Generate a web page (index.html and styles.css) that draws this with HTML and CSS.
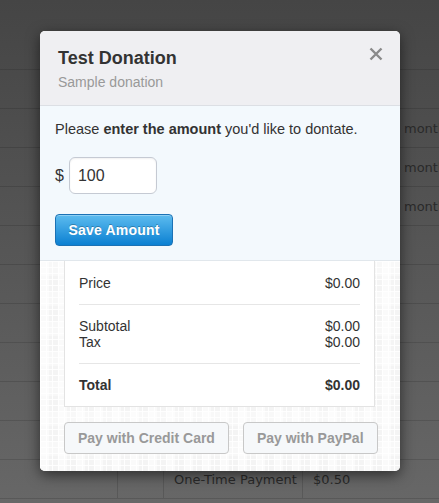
FILE: index.html
```html
<!DOCTYPE html>
<html>
<head>
<meta charset="utf-8">
<link rel="stylesheet" href="styles.css">
</head>
<body>
<div class="page">
  <div class="page-head"></div>
  <div class="row"><div class="c c1"></div><div class="c c2"></div><div class="c c3"></div><div class="c c4"></div><div class="c c5"></div></div>
  <div class="row"><div class="c c1"></div><div class="c c2"></div><div class="c c3"></div><div class="c c4"></div><div class="c c5">month</div></div>
  <div class="row"><div class="c c1"></div><div class="c c2"></div><div class="c c3"></div><div class="c c4"></div><div class="c c5">month</div></div>
  <div class="row"><div class="c c1"></div><div class="c c2"></div><div class="c c3"></div><div class="c c4"></div><div class="c c5">month</div></div>
  <div class="row"><div class="c c1"></div><div class="c c2"></div><div class="c c3"></div><div class="c c4"></div><div class="c c5"></div></div>
  <div class="row"><div class="c c1"></div><div class="c c2"></div><div class="c c3"></div><div class="c c4"></div><div class="c c5"></div></div>
  <div class="row"><div class="c c1"></div><div class="c c2"></div><div class="c c3"></div><div class="c c4"></div><div class="c c5"></div></div>
  <div class="row"><div class="c c1"></div><div class="c c2"></div><div class="c c3"></div><div class="c c4"></div><div class="c c5"></div></div>
  <div class="row"><div class="c c1"></div><div class="c c2"></div><div class="c c3"></div><div class="c c4"></div><div class="c c5"></div></div>
  <div class="row"><div class="c c1"></div><div class="c c2"></div><div class="c c3"></div><div class="c c4"></div><div class="c c5"></div></div>
  <div class="row"><div class="c c1"></div><div class="c c2"></div><div class="c c3">One-Time Payment</div><div class="c c4">$0.50</div><div class="c c5"></div></div>
</div>

<div class="modal">
  <div class="modal-head">
    <h1 class="title">Test Donation</h1>
    <div class="subtitle">Sample donation</div>
    <svg class="close" width="14" height="14" viewBox="0 0 14 14"><path d="M1.5 1.5 L12.5 12.5 M12.5 1.5 L1.5 12.5" stroke="#8a8a8a" stroke-width="2.4" stroke-linecap="butt"/></svg>
  </div>
  <div class="amount">
    <p class="lead">Please <b>enter the amount</b> you'd like to dontate.</p>
    <div class="field"><span class="cur">$</span><input class="inp" type="text" value="100"></div>
    <button class="save">Save Amount</button>
  </div>
  <div class="checkout">
    <div class="card">
      <div class="grp"><div class="ln"><span>Price</span><span>$0.00</span></div></div>
      <div class="grp"><div class="ln"><span>Subtotal</span><span>$0.00</span></div><div class="ln"><span>Tax</span><span>$0.00</span></div></div>
      <div class="grp total"><div class="ln"><span>Total</span><span>$0.00</span></div></div>
    </div>
    <div class="pay">
      <button class="pbtn">Pay with Credit Card</button>
      <button class="pbtn">Pay with PayPal</button>
    </div>
  </div>
</div>
</body>
</html>
```
FILE: styles.css
```css
html, body {
  margin: 0;
  padding: 0;
}
body {
  width: 439px;
  height: 503px;
  overflow: hidden;
  position: relative;
  background: linear-gradient(#454545, #676767);
  font-family: "Liberation Sans", Arial, sans-serif;
}
.page {
  font-family: "DejaVu Sans", sans-serif;
  font-size: 13px;
  color: #2a2a2a;
}
.page-head {
  height: 70px;
  border-bottom: 1px solid rgba(0,0,0,0.12);
  box-sizing: border-box;
}
.row {
  display: flex;
  height: 39px;
  border-bottom: 1px solid rgba(0,0,0,0.13);
  box-sizing: border-box;
}
.c {
  display: flex;
  align-items: center;
  box-sizing: border-box;
  flex: none;
  white-space: nowrap;
}
.c1 { width: 117px; }
.c2 { width: 46px; border-left: 1px solid rgba(0,0,0,0.13); }
.c3 { width: 139px; border-left: 1px solid rgba(0,0,0,0.13); padding-left: 10px; }
.c4 { width: 92px; border-left: 1px solid rgba(0,0,0,0.13); padding-left: 10px; }
.c5 { flex: 1 1 0; min-width: 0; padding-left: 10px; }

.modal {
  position: absolute;
  left: 40px;
  top: 31px;
  width: 360px;
  height: 440px;
  border-radius: 5px;
  overflow: hidden;
  background: #fff;
  box-shadow: 0 4px 14px rgba(0,0,0,0.55);
  display: flex;
  flex-direction: column;
  color: #333;
}
.modal-head {
  position: relative;
  background: #efeff2;
  padding: 16px 18px 13px;
  border-bottom: 1px solid #dcdfe4;
}
.title {
  margin: 0;
  font-size: 18px;
  line-height: 22px;
  font-weight: bold;
  color: #333;
}
.subtitle {
  margin-top: 3px;
  font-size: 14px;
  line-height: 20px;
  color: #999;
}
.close {
  position: absolute;
  top: 16px;
  right: 17px;
}
.amount {
  background: #f3f9fd;
  padding: 13px 15px 14px;
  border-bottom: 1px solid #e1e7ec;
}
.lead {
  margin: 0;
  font-size: 14.5px;
  line-height: 20px;
}
.field {
  display: flex;
  align-items: center;
  gap: 5px;
  margin-top: 18px;
  font-size: 16px;
}
.inp {
  width: 88px;
  height: 37px;
  box-sizing: border-box;
  border: 1px solid #c5cad3;
  border-radius: 6px;
  background: #fff;
  padding: 0 8px;
  font-family: "Liberation Sans", Arial, sans-serif;
  font-size: 16px;
  color: #333;
  box-shadow: inset 0 1px 2px rgba(0,0,0,0.06);
  outline: none;
}
.save {
  display: block;
  margin-top: 20px;
  width: 118px;
  height: 32px;
  border: 1px solid #1b72b5;
  border-radius: 4px;
  background: linear-gradient(#5dbcef, #0b80d2);
  color: #fff;
  font-family: "Liberation Sans", Arial, sans-serif;
  font-weight: bold;
  font-size: 14px;
  letter-spacing: 0.2px;
  text-shadow: 0 -1px 0 rgba(0,0,0,0.25);
  box-shadow: inset 0 1px 0 rgba(255,255,255,0.3);
  padding: 0;
}
.checkout {
  flex: 1;
  padding: 0 25px 0 24px;
  background-color: #f4f4f4;
  background-image:
    linear-gradient(90deg, rgba(255,255,255,0.9) 1px, transparent 1px),
    linear-gradient(rgba(255,255,255,0.9) 1px, transparent 1px),
    linear-gradient(90deg, rgba(255,255,255,0.5) 50%, transparent 50%),
    linear-gradient(rgba(255,255,255,0.4) 50%, transparent 50%);
  background-size: 6px 6px, 6px 6px, 18px 18px, 30px 30px;
}
.card {
  background: #fff;
  border: 1px solid #e3e3e3;
  border-top: none;
  padding: 1px 14px 0;
  font-size: 14px;
}
.grp {
  padding: 13px 0;
  border-top: 1px solid #e6e6e6;
}
.grp:first-child {
  border-top: none;
}
.ln {
  display: flex;
  justify-content: space-between;
  line-height: 16px;
}
.total {
  font-weight: bold;
}
.pay {
  display: flex;
  gap: 14px;
  margin-top: 15px;
}
.pbtn {
  flex: none;
  white-space: nowrap;
  height: 32px;
  padding: 0 13px;
  border: 1px solid #c8c8c8;
  border-radius: 4px;
  background: #f6f8fa;
  color: #999;
  font-family: "Liberation Sans", Arial, sans-serif;
  font-weight: bold;
  font-size: 14px;
}
```
